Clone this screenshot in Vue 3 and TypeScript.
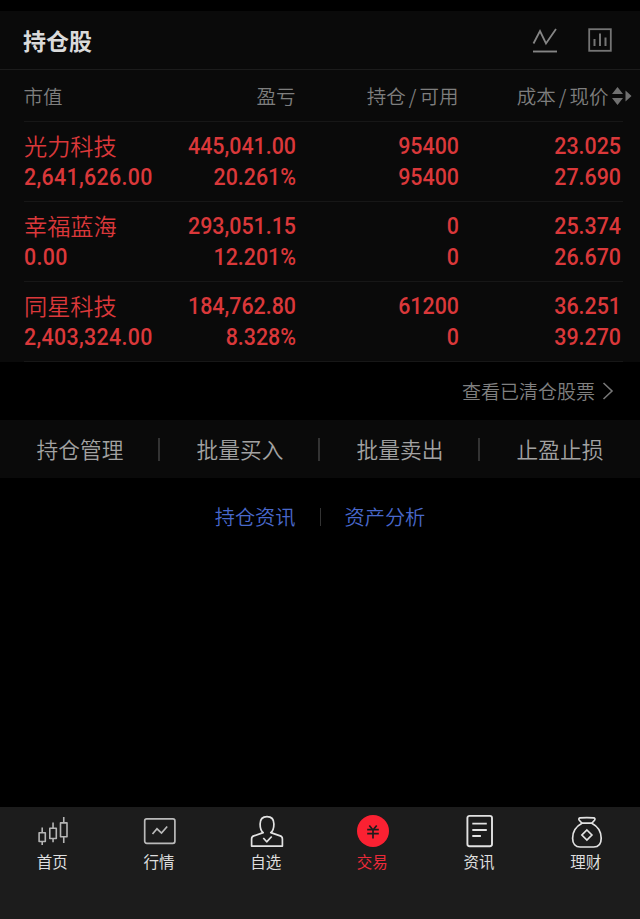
<script setup lang="ts">
interface Holding {
  name: string
  value: string
  profit: string
  rate: string
  held: string
  available: string
  cost: string
  price: string
}

const holdings: Holding[] = [
  { name: '光力科技', value: '2,641,626.00', profit: '445,041.00', rate: '20.261%', held: '95400', available: '95400', cost: '23.025', price: '27.690' },
  { name: '幸福蓝海', value: '0.00', profit: '293,051.15', rate: '12.201%', held: '0', available: '0', cost: '25.374', price: '26.670' },
  { name: '同星科技', value: '2,403,324.00', profit: '184,762.80', rate: '8.328%', held: '61200', available: '0', cost: '36.251', price: '39.270' },
]

const actions: string[] = ['持仓管理', '批量买入', '批量卖出', '止盈止损']

const tabs: { id: string; label: string }[] = [
  { id: 'home', label: '首页' },
  { id: 'market', label: '行情' },
  { id: 'watch', label: '自选' },
  { id: 'trade', label: '交易' },
  { id: 'news', label: '资讯' },
  { id: 'wealth', label: '理财' },
]
</script>

<template>
  <div class="screen">
    <section class="panel">
      <header class="title-bar">
        <h1>持仓股</h1>
        <div class="tools">
          <svg width="26" height="26" viewBox="0 0 26 26" fill="none" stroke="#858585" stroke-width="1.8">
            <path d="M1.500 16.500 8 4l6 12.500L24 2" />
            <path d="M1 24.500h24" stroke-width="1.900" />
          </svg>
          <svg width="24" height="24" viewBox="0 0 24 24" fill="none" stroke="#757575">
            <rect x="1.200" y="1.200" width="21.600" height="21.600" stroke-width="1.800" />
            <path d="M6.500 11v7M12 5.500V18M17.500 9.500V18" stroke-width="2" />
          </svg>
        </div>
      </header>

      <div class="row head">
        <span>市值</span>
        <span>盈亏</span>
        <span>持仓<b>/</b>可用</span>
        <span>成本<b>/</b>现价</span>
        <svg class="sort" width="20" height="20" viewBox="0 0 20 20" fill="#707070">
          <path d="M5.500 1 11 8H0zM5.500 19 0 12h11zM13.500 4.500l6 5.500-6 5.500z" />
        </svg>
      </div>

      <div v-for="h in holdings" :key="h.name" class="row holding">
        <div><span class="name">{{ h.name }}</span><span class="value">{{ h.value }}</span></div>
        <div><span>{{ h.profit }}</span><span>{{ h.rate }}</span></div>
        <div><span>{{ h.held }}</span><span>{{ h.available }}</span></div>
        <div><span>{{ h.cost }}</span><span>{{ h.price }}</span></div>
      </div>
      <div class="end-line"></div>
    </section>

    <div class="cleared">
      <span>查看已清仓股票</span>
      <svg width="12" height="20" viewBox="0 0 12 20" fill="none" stroke="#777" stroke-width="1.600">
        <path d="M1.500 2 10 10l-8.500 8" />
      </svg>
    </div>

    <nav class="actions">
      <span v-for="a in actions" :key="a">{{ a }}</span>
    </nav>

    <div class="links">
      <span>持仓资讯</span>
      <i></i>
      <span>资产分析</span>
    </div>

    <nav class="tabs">
      <div v-for="t in tabs" :key="t.id" class="tab" :class="{ active: t.id === 'trade' }">
        <svg width="34" height="34" viewBox="0 0 34 34" fill="none" stroke="#e2e2e2" stroke-width="1.700" stroke-linejoin="round">
          <g v-if="t.id === 'home'" stroke="#b5b5b5" stroke-width="1.600">
            <rect x="3.100" y="18.800" width="6.200" height="8.700" />
            <rect x="13.800" y="14.300" width="6.500" height="10.200" />
            <rect x="24.500" y="8.900" width="6.500" height="13.800" />
            <path d="M6.200 13.500v5.300M6.200 27.500V31M17.050 8.500v5.800M17.050 24.500v3.800M27.750 3v5.900M27.750 22.700V29" />
          </g>
          <g v-else-if="t.id === 'market'" stroke="#bababa">
            <rect x="1.700" y="4.900" width="30.200" height="24.400" rx="2" />
            <path d="M9.500 20l4.500-5.200 4.500 4.200 5.700-6.500" stroke-linejoin="miter" />
          </g>
          <g v-else-if="t.id === 'watch'">
            <path d="M13.200 18.600C11 16.900 10.100 14 10.100 10c0-4.600 2.500-7.400 6.900-7.400s6.900 2.800 6.900 7.400c0 4-.9 6.900-3.100 8.600l9.400 3.300c1.500.5 2.200 1.500 2.200 3v7.200H1.600v-7.200c0-1.500.7-2.500 2.200-3z" />
            <path d="M13.300 24l3.400 3.800 5-5.300" />
          </g>
          <g v-else-if="t.id === 'trade'">
            <circle cx="17" cy="17" r="16" fill="#fb2132" stroke="none" />
            <path d="M13.300 11.500l3.700 4.500 3.700-4.500M11.200 15.700h11.600M11.200 19.700h11.600M17 16v8.500" stroke="#1c1c1c" stroke-width="1.700" />
          </g>
          <g v-else-if="t.id === 'news'" stroke-width="1.900">
            <rect x="4.400" y="1.900" width="24.600" height="30.400" rx="2.200" />
            <path d="M9.300 9.600h14.500M9.300 16h14.500M9.300 22h8.600" />
          </g>
          <g v-else>
            <path d="M12 9.200 9.300 6.200C8.400 5 8.900 4 10.300 3.900c4.400-.4 8.800-.4 13.200 0 1.400.1 1.900 1.100 1 2.300l-2.700 3" />
            <path d="M12 9.200h9.800C27.700 12.300 31.200 18 31.200 24.200c0 5.800-3 8.800-7.500 8.800H10.100c-4.500 0-7.500-3-7.500-8.800 0-6.200 3.500-11.900 9.400-15z" />
            <path d="M16.900 16l5 5-5 5-5-5z" stroke-linejoin="miter" />
          </g>
        </svg>
        <span>{{ t.label }}</span>
      </div>
    </nav>
  </div>
</template>

<style>
body {
  background: #000;
}
</style>

<style scoped>
.screen {
  box-sizing: border-box;
  width: 640px;
  height: 919px;
  padding-top: 11px;
  display: flex;
  flex-direction: column;
  background: #000;
  font-family: Roboto, "Noto Sans CJK SC", sans-serif;
  overflow: hidden;
  white-space: nowrap;
}
.panel {
  background: #0a0a0a;
}
.title-bar {
  box-sizing: border-box;
  height: 59px;
  padding: 0 28px 0 23px;
  display: flex;
  align-items: center;
  justify-content: space-between;
  border-bottom: 1px solid #1c1c1c;
}
h1 {
  margin: 0;
  color: #dadada;
  font: 700 23px/58px "Noto Sans CJK SC", sans-serif;
}
.tools {
  display: flex;
  align-items: center;
  gap: 30px;
}
.row {
  display: grid;
  grid-template-columns: 128px 144px 163px 162px;
}
.row > :nth-child(n + 2) {
  text-align: right;
}
.head {
  height: 51px;
  padding-left: 23.500px;
  grid-template-columns: 128px 144px 163px 150px 20px;
  align-items: center;
  color: #7e7e7e;
  font: 350 19.500px/51px "Noto Sans CJK SC", sans-serif;
}
.head b {
  padding: 0 3px;
  font-weight: inherit;
}
.sort {
  margin: 1px 0 0 3px;
}
.holding {
  box-sizing: border-box;
  height: 80px;
  width: 599px;
  margin-left: 24px;
  padding-top: 9px;
  border-top: 1px solid #171717;
  color: #da383a;
  font-size: 23px;
  font-weight: 500;
  line-height: 31px;
  letter-spacing: 0;
}
.holding span {
  display: block;
  transform: scaleX(0.93);
  transform-origin: 100% 50%;
}
.holding .value {
  letter-spacing: 0.330px;
  transform-origin: 0 50%;
}
.holding .name {
  height: 31px;
  font: 350 23.200px/29px "Noto Sans CJK SC", sans-serif;
  letter-spacing: 0;
  transform: none;
}
.end-line {
  width: 599px;
  height: 1px;
  margin-left: 24px;
  background: #171717;
}
.cleared {
  height: 58px;
  padding-right: 26px;
  display: flex;
  align-items: center;
  justify-content: flex-end;
  gap: 7px;
  color: #808080;
  font: 350 19px/58px "Noto Sans CJK SC", sans-serif;
}
.actions {
  height: 58px;
  display: grid;
  grid-template-columns: repeat(4, 160px);
  align-items: center;
  background: #0a0a0a;
  color: #a2a2a2;
  font: 350 21.700px/58px "Noto Sans CJK SC", sans-serif;
  text-align: center;
}
.actions span:not(:last-child) {
  background: linear-gradient(#333, #333) 158px 50% / 2px 23px no-repeat;
}
.links {
  height: 78px;
  display: flex;
  align-items: center;
  justify-content: center;
  gap: 24px;
  color: #4968cb;
  font: 350 20.200px/78px "Noto Sans CJK SC", sans-serif;
}
.links i {
  width: 1px;
  height: 18px;
  background: #333;
}
.tabs {
  height: 112px;
  margin-top: auto;
  display: grid;
  grid-template-columns: repeat(6, 1fr);
  background: #1c1c1c;
}
.tab {
  display: flex;
  flex-direction: column;
  align-items: center;
  padding-top: 7px;
  color: #dedede;
  font: 400 15.500px/24px "Noto Sans CJK SC", sans-serif;
}
.tab span {
  margin: 0.500px 2px 0 0;
}
.tab.active {
  color: #ed2a39;
}
</style>
